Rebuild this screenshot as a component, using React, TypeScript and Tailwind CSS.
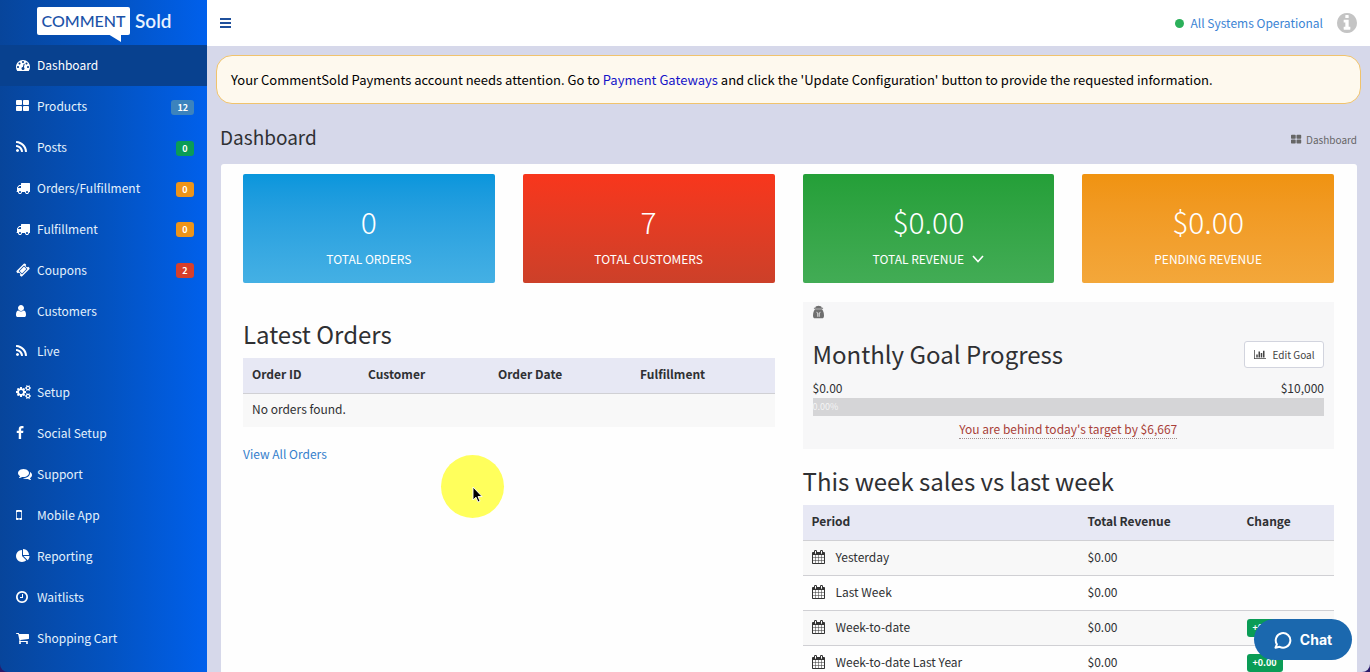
import React from "react";

type Glyph = { box: string; d: string };

const ICONS: Record<string, Glyph> = {
  dashboard: {
    box: "0 0 1792 1792",
    d: "M384 1152q0-53-37.5-90.5t-90.5-37.5-90.5 37.5-37.5 90.5 37.5 90.5 90.5 37.5 90.5-37.5 37.5-90.5zm192-448q0-53-37.5-90.5t-90.5-37.5-90.5 37.5-37.5 90.5 37.5 90.5 90.5 37.5 90.5-37.5 37.5-90.5zm428 481l101-382q6-26-7.5-48.5t-38.5-29.5-48 6.5-30 39.5l-101 382q-60 5-107 43.5t-63 98.5q-20 77 20 146t117 89 146-20 89-117q16-60-6-117t-72-91zm660-33q0-53-37.5-90.5t-90.5-37.5-90.5 37.5-37.5 90.5 37.5 90.5 90.5 37.5 90.5-37.5 37.5-90.5zm-640-640q0-53-37.5-90.5t-90.5-37.5-90.5 37.5-37.5 90.5 37.5 90.5 90.5 37.5 90.5-37.5 37.5-90.5zm448 192q0-53-37.5-90.5t-90.5-37.5-90.5 37.5-37.5 90.5 37.5 90.5 90.5 37.5 90.5-37.5 37.5-90.5zm320 448q0 261-141 483-19 29-54 29h-1402q-35 0-54-29-141-221-141-483 0-182 71-348t191-286 286-191 348-71 348 71 286 191 191 286 71 348z",
  },
  grid: {
    box: "64 0 1792 1792",
    d: "M832 1024v384q0 52-38 90t-90 38h-512q-52 0-90-38t-38-90v-384q0-52 38-90t90-38h512q52 0 90 38t38 90zm0-768v384q0 52-38 90t-90 38h-512q-52 0-90-38t-38-90v-384q0-52 38-90t90-38h512q52 0 90 38t38 90zm896 768v384q0 52-38 90t-90 38h-512q-52 0-90-38t-38-90v-384q0-52 38-90t90-38h512q52 0 90 38t38 90zm0-768v384q0 52-38 90t-90 38h-512q-52 0-90-38t-38-90v-384q0-52 38-90t90-38h512q52 0 90 38t38 90z",
  },
  rss: {
    box: "192 0 1792 1792",
    d: "M576 1344q0 80-56 136t-136 56-136-56-56-136 56-136 136-56 136 56 56 136zm512 123q2 28-17 48-18 21-47 21h-135q-25 0-43-16.5t-20-41.5q-22-229-184.5-391.5t-391.5-184.5q-25-2-41.5-20t-16.5-43v-135q0-29 21-47 17-17 43-17h5q160 13 306 80.5t259 181.5q114 113 181.5 259t80.5 306zm512 2q2 27-18 47-18 20-46 20h-143q-26 0-44.5-17.5t-19.5-42.5q-12-215-101-408.5t-231.5-336-336-231.5-408.5-102q-25-1-42.5-19.5t-17.5-43.5v-143q0-28 20-46 18-18 44-18h3q262 13 501.5 120t425.5 294q187 186 294 425.5t120 501.5z",
  },
  truck: {
    box: "0 0 1792 1792",
    d: "M640 1408q0-52-38-90t-90-38-90 38-38 90 38 90 90 38 90-38 38-90zm-384-512h384v-256h-158q-13 0-22 9l-195 195q-9 9-9 22v30zm1280 512q0-52-38-90t-90-38-90 38-38 90 38 90 90 38 90-38 38-90zm256-1088v1024q0 15-4 26.5t-13.5 18.5-16.5 11.5-23.5 6-22.5 2-25.5 0-22.5-.5q0 106-75 181t-181 75-181-75-75-181h-384q0 106-75 181t-181 75-181-75-75-181h-64q-3 0-22.5.5t-25.5 0-22.5-2-23.5-6-16.5-11.5-13.5-18.5-4-26.5q0-26 19-45t45-19v-320q0-8-.5-35t0-38 2.5-34.5 6.5-37 14-30.5 22.5-30l198-198q19-19 50.5-32t58.5-13h160v-192q0-26 19-45t45-19h1024q26 0 45 19t19 45z",
  },
  ticket: {
    box: "0 0 1792 1792",
    d: "M1024 452l316 316-572 572-316-316zm-211 979l618-618q19-19 19-45t-19-45l-362-362q-18-18-45-18t-45 18l-618 618q-19 19-19 45t19 45l362 362q18 18 45 18t45-18zm889-637l-907 908q-37 37-90.5 37t-90.5-37l-126-126q56-56 56-136t-56-136-136-56-136 56l-125-126q-37-37-37-90.5t37-90.5l907-906q37-37 90.5-37t90.5 37l125 125q-56 56-56 136t56 136 136 56 136-56l126 125q37 37 37 90.5t-37 90.5z",
  },
  user: {
    box: "256 0 1792 1792",
    d: "M1536 1399q0 109-62.5 187t-150.5 78h-854q-88 0-150.5-78t-62.5-187q0-85 8.5-160.5t31.5-152 58.5-131 94-89 134.5-34.5q131 128 313 128t313-128q76 0 134.5 34.5t94 89 58.5 131 31.5 152 8.5 160.5zm-256-887q0 159-112.5 271.5t-271.5 112.5-271.5-112.5-112.5-271.5 112.5-271.5 271.5-112.5 271.5 112.5 112.5 271.5z",
  },
  cogs: {
    box: "0 0 1792 1792",
    d: "M896 896q0-106-75-181t-181-75-181 75-75 181 75 181 181 75 181-75 75-181zm768 512q0-52-38-90t-90-38-90 38-38 90q0 53 37.5 90.5t90.5 37.5 90.5-37.5 37.5-90.5zm0-1024q0-52-38-90t-90-38-90 38-38 90q0 53 37.5 90.5t90.5 37.5 90.5-37.5 37.5-90.5zm-384 421v185q0 10-7 19.5t-16 10.5l-155 24q-11 35-32 76 34 48 90 115 7 11 7 20 0 12-7 19-23 30-82.5 89.5t-78.5 59.5q-11 0-21-7l-115-90q-37 19-77 31-11 108-23 155-7 24-30 24h-186q-11 0-20-7.5t-10-17.5l-23-153q-34-10-75-31l-118 89q-7 7-20 7-11 0-21-8-144-133-144-160 0-9 7-19 10-14 41-53t47-61q-23-44-35-82l-152-24q-10-1-17-9.5t-7-19.5v-185q0-10 7-19.5t16-10.5l155-24q11-35 32-76-34-48-90-115-7-11-7-20 0-12 7-20 22-30 82-89t79-59q11 0 21 7l115 90q34-18 77-32 11-108 23-154 7-24 30-24h186q11 0 20 7.5t10 17.5l23 153q34 10 75 31l118-89q8-7 20-7 11 0 21 8 144 133 144 160 0 9-7 19-12 16-42 54t-45 60q23 48 34 82l152 23q10 2 17 10.5t7 19.5zm640 533v140q0 16-149 31-12 27-30 52 51 113 51 138 0 4-4 7-122 71-124 71-8 0-46-47t-52-68q-20 2-30 2t-30-2q-14 21-52 68t-46 47q-2 0-124-71-4-3-4-7 0-25 51-138-18-25-30-52-149-15-149-31v-140q0-16 149-31 13-29 30-52-51-113-51-138 0-4 4-7 4-2 35-20t59-34 30-16q8 0 46 46.5t52 67.5q20-2 30-2t30 2q51-71 92-112l6-2q4 0 124 70 4 3 4 7 0 25-51 138 17 23 30 52 149 15 149 31zm0-1024v140q0 16-149 31-12 27-30 52 51 113 51 138 0 4-4 7-122 71-124 71-8 0-46-47t-52-68q-20 2-30 2t-30-2q-14 21-52 68t-46 47q-2 0-124-71-4-3-4-7 0-25 51-138-18-25-30-52-149-15-149-31v-140q0-16 149-31 13-29 30-52-51-113-51-138 0-4 4-7 4-2 35-20t59-34 30-16q8 0 46 46.5t52 67.5q20-2 30-2t30 2q51-71 92-112l6-2q4 0 124 70 4 3 4 7 0 25-51 138 17 23 30 52 149 15 149 31z",
  },
  facebook: {
    box: "384 0 1792 1792",
    d: "M1343 12v264h-157q-86 0-116 36t-30 108v189h293l-39 296h-254v759h-306v-759h-255v-296h255v-218q0-186 104-288.5t277-102.5q147 0 228 12z",
  },
  comments: {
    box: "-256 0 1792 1792",
    d: "M1408 768q0 139-94 257t-256.5 186.5-353.5 68.5q-86 0-176-16-124 88-278 128-36 9-86 16h-3q-11 0-20.5-8t-11.5-21q-1-3-1-6.5t.5-6.5 2-6l2.5-5 3.5-5.5 4-5 4.5-5 4-4.5q5-6 23-25t26-29.5 22.5-29 25-38.5 20.5-44q-124-72-195-177t-71-224q0-139 94-257t256.5-186.5 353.5-68.5 353.5 68.5 256.5 186.5 94 257zm384 256q0 120-71 224.5t-195 176.5q10 24 20.5 44t25 38.5 22.5 29 26 29.5 23 25q1 1 4 4.5t4.5 5 4 5 3.5 5.5l2.5 5 2 6 .5 6.5-1 6.5q-3 14-13 22t-22 7q-50-7-86-16-154-40-278-128-90 16-176 16-271 0-472-132 58 4 88 4 161 0 309-45t264-129q125-92 192-212t67-254q0-77-23-152 129 71 204 178t75 230z",
  },
  mobile: {
    box: "512 0 1792 1792",
    d: "M976 1408q0-33-23.5-56.5t-56.5-23.5-56.5 23.5-23.5 56.5 23.5 56.5 56.5 23.5 56.5-23.5 23.5-56.5zm208-160v-704q0-13-9.5-22.5t-22.5-9.5h-512q-13 0-22.5 9.5t-9.5 22.5v704q0 13 9.5 22.5t22.5 9.5h512q13 0 22.5-9.5t9.5-22.5zm-192-848q0-16-16-16h-160q-16 0-16 16t16 16h160q16 0 16-16zm288-16v1024q0 52-38 90t-90 38h-512q-52 0-90-38t-38-90v-1024q0-52 38-90t90-38h512q52 0 90 38t38 90z",
  },
  pie: {
    box: "0 0 1792 1792",
    d: "M768 890l546 546q-106 108-247.5 168t-298.5 60q-209 0-385.5-103t-279.5-279.5-103-385.5 103-385.5 279.5-279.5 385.5-103v762zm187 6h773q0 157-60 298.5t-168 247.5zm709-128h-768v-768q209 0 385.5 103t279.5 279.5 103 385.5z",
  },
  clock: {
    box: "128 0 1792 1792",
    d: "M1024 544v448q0 14-9 23t-23 9h-320q-14 0-23-9t-9-23v-64q0-14 9-23t23-9h224v-352q0-14 9-23t23-9h64q14 0 23 9t9 23zm416 352q0-148-73-273t-198-198-273-73-273 73-198 198-73 273 73 273 198 198 273 73 273-73 198-198 73-273zm224 0q0 209-103 385.5t-279.5 279.5-385.5 103-385.5-103-279.5-279.5-103-385.5 103-385.5 279.5-279.5 385.5-103 385.5 103 279.5 279.5 103 385.5z",
  },
  cart: {
    box: "64 0 1792 1792",
    d: "M704 1536q0 52-38 90t-90 38-90-38-38-90 38-90 90-38 90 38 38 90zm896 0q0 52-38 90t-90 38-90-38-38-90 38-90 90-38 90 38 38 90zm128-1088v512q0 24-16.5 42.5t-40.5 21.5l-1044 122q13 60 13 70 0 16-24 64h920q26 0 45 19t19 45-19 45-45 19h-1024q-26 0-45-19t-19-45q0-11 8-31.5t16-36 21.5-40 15.5-29.5l-177-823h-204q-26 0-45-19t-19-45 19-45 45-19h256q16 0 28.5 6.5t19.5 15.5 13 24.5 8 26 5.5 29.5 4.5 26h1201q26 0 45 19t19 45z",
  },
  calendar: {
    box: "64 0 1792 1792",
    d: "M192 1664h288v-288h-288v288zm352 0h320v-288h-320v288zm-352-352h288v-320h-288v320zm352 0h320v-320h-320v320zm-352-384h288v-288h-288v288zm736 736h320v-288h-320v288zm-384-736h320v-288h-320v288zm768 736h288v-288h-288v288zm-384-352h320v-320h-320v320zm-352-864v-288q0-13-9.5-22.5t-22.5-9.5h-64q-13 0-22.5 9.5t-9.5 22.5v288q0 13 9.5 22.5t22.5 9.5h64q13 0 22.5-9.5t9.5-22.5zm736 864h288v-320h-288v320zm-384-384h320v-288h-320v288zm384 0h288v-288h-288v288zm32-480v-288q0-13-9.5-22.5t-22.5-9.5h-64q-13 0-22.5 9.5t-9.5 22.5v288q0 13 9.5 22.5t22.5 9.5h64q13 0 22.5-9.5t9.5-22.5zm384-64v1280q0 52-38 90t-90 38h-1408q-52 0-90-38t-38-90v-1280q0-52 38-90t90-38h128v-96q0-66 47-113t113-47h64q66 0 113 47t47 113v96h384v-96q0-66 47-113t113-47h64q66 0 113 47t47 113v96h128q52 0 90 38t38 90z",
  },
  bars: {
    box: "0 0 2048 1792",
    d: "M640 896v512h-256v-512h256zm384-512v1024h-256v-1024h256zm1024 1152v128h-2048v-1536h128v1408h1920zm-640-896v768h-256v-768h256zm384-384v1152h-256v-1152h256z",
  },
  info: {
    box: "128 128 1536 1536",
    d: "M1152 1376v-160q0-14-9-23t-23-9h-96v-512q0-14-9-23t-23-9h-320q-14 0-23 9t-9 23v160q0 14 9 23t23 9h96v320h-96q-14 0-23 9t-9 23v160q0 14 9 23t23 9h448q14 0 23-9t9-23zm-128-896v-160q0-14-9-23t-23-9h-192q-14 0-23 9t-9 23v160q0 14 9 23t23 9h192q14 0 23-9t9-23zm640 416q0 209-103 385.5t-279.5 279.5-385.5 103-385.5-103-279.5-279.5-103-385.5 103-385.5 279.5-279.5 385.5-103 385.5 103 279.5 279.5 103 385.5z",
  },
};

function Icon({ name, className }: { name: string; className: string }) {
  return (
    <svg viewBox={ICONS[name].box} className={className} fill="currentColor" overflow="visible" aria-hidden="true">
      <path d={ICONS[name].d} />
    </svg>
  );
}

type NavItem = { icon: string; label: string; count?: string; tone?: string };

const NAV: NavItem[] = [
  { icon: "dashboard", label: "Dashboard" },
  { icon: "grid", label: "Products", count: "12", tone: "bg-[#3c83bd]" },
  { icon: "rss", label: "Posts", count: "0", tone: "bg-[#0a9c56]" },
  { icon: "truck", label: "Orders/Fulfillment", count: "0", tone: "bg-[#ee9418]" },
  { icon: "truck", label: "Fulfillment", count: "0", tone: "bg-[#ee9418]" },
  { icon: "ticket", label: "Coupons", count: "2", tone: "bg-[#d73f2a]" },
  { icon: "user", label: "Customers" },
  { icon: "rss", label: "Live" },
  { icon: "cogs", label: "Setup" },
  { icon: "facebook", label: "Social Setup" },
  { icon: "comments", label: "Support" },
  { icon: "mobile", label: "Mobile App" },
  { icon: "pie", label: "Reporting" },
  { icon: "clock", label: "Waitlists" },
  { icon: "cart", label: "Shopping Cart" },
];

function Logo() {
  return (
    <a href="#" className="flex h-[45px] shrink-0 items-start pt-[7px] pl-[37px] font-['Lato',sans-serif]">
      <span className="relative flex h-7 w-[93px] items-center justify-center rounded-xs bg-white text-[16px] font-medium text-[#1b52a8]">
        COMMENT
        <svg viewBox="0 0 13 8" className="absolute top-[27px] right-[9px] h-2 w-[13px]" fill="#ffffff" aria-hidden="true">
          <path d="M0 0h13v8z" />
        </svg>
      </span>
      <span className="pl-[5px] text-[19px] leading-7 font-semibold text-[#e8f2ff]">Sold</span>
    </a>
  );
}

function Sidebar() {
  return (
    <aside className="flex w-[207px] shrink-0 flex-col overflow-hidden rounded-bl-lg bg-linear-to-r from-[#07459b] via-[#0352bf] to-[#0060ec]">
      <Logo />
      <nav className="grid h-[613px] shrink-0 auto-rows-fr">
        {NAV.map((item, i) => (
          <a
            key={item.label}
            href="#"
            className={
              i === 0
                ? "flex items-center bg-[#08418f] pr-[13px] pl-4 text-white"
                : "flex items-center pr-[13px] pl-4 text-[#e3f1fc]"
            }
          >
            <Icon name={item.icon} className="mr-[7px] size-[14px] shrink-0 text-white" />
            <span className="flex-1 leading-5">{item.label}</span>
            {item.count && (
              <span
                className={`mt-[2px] min-w-[18px] rounded-[3px] px-[6px] text-center text-[9px] leading-[15px] font-bold text-white ${item.tone}`}
              >
                {item.count}
              </span>
            )}
          </a>
        ))}
      </nav>
    </aside>
  );
}

const STATS = [
  { value: "0", label: "TOTAL ORDERS", tone: "from-[#0896dc] to-[#44b0e4]" },
  { value: "7", label: "TOTAL CUSTOMERS", tone: "from-[#f8361c] to-[#cc4029]" },
  { value: "$0.00", label: "TOTAL REVENUE", tone: "from-[#249f38] to-[#42ac55]", more: true },
  { value: "$0.00", label: "PENDING REVENUE", tone: "from-[#f09310] to-[#f3a73a]" },
];

const PERIODS = [
  { name: "Yesterday", total: "$0.00", change: "" },
  { name: "Last Week", total: "$0.00", change: "" },
  { name: "Week-to-date", total: "$0.00", change: "+0.00" },
  { name: "Week-to-date Last Year", total: "$0.00", change: "+0.00" },
];

function Stats() {
  return (
    <section className="grid grid-cols-4 gap-7">
      {STATS.map((s) => (
        <div
          key={s.label}
          className={`flex h-[109px] flex-col items-center rounded-xs bg-linear-to-b pt-[27px] text-white ${s.tone}`}
        >
          <div className="text-[30px] leading-10 font-light">{s.value}</div>
          <div className="flex items-center gap-2 pt-2 text-[12px] leading-5">
            {s.label}
            {s.more && (
              <svg viewBox="0 0 12 8" className="h-2 w-3" fill="none" stroke="currentColor" strokeWidth="1.6" aria-hidden="true">
                <path d="M1 1l5 5.5L11 1" />
              </svg>
            )}
          </div>
        </div>
      ))}
    </section>
  );
}

function LatestOrders() {
  return (
    <section className="pt-[33px]">
      <h2 className="text-[24px] leading-9">Latest Orders</h2>
      <table className="mt-[6px] w-full table-fixed text-left leading-4">
        <thead>
          <tr className="h-[35px] border-b border-[#d0d0d4] bg-[#e7e8f4]">
            <th className="w-[116px] pb-[2px] pl-[9px]">Order ID</th>
            <th className="w-[130px] pb-[2px] pl-[9px]">Customer</th>
            <th className="w-[142px] pb-[2px] pl-[9px]">Order Date</th>
            <th className="pb-[2px] pl-[9px]">Fulfillment</th>
          </tr>
        </thead>
        <tbody>
          <tr className="h-[34px] bg-[#f8f8f8]">
            <td colSpan={4} className="pb-[2px] pl-[9px]">No orders found.</td>
          </tr>
        </tbody>
      </table>
      <a href="#" className="mt-[17px] inline-block leading-5 text-[#3580cc]">View All Orders</a>
    </section>
  );
}

function MonthlyGoal() {
  return (
    <section className="bg-[#f7f7f8] px-[10px] pt-[3px] pb-[10px]">
      <svg viewBox="0 0 12 14" className="h-[14px] w-[11px] text-[#6f6f6f]" fill="currentColor" aria-hidden="true">
        <path d="M3.2.6C4.300 1 5 .2 6 .2s1.700.8 2.800.4l.7 1.800H11v1H1v-1h1.500z" />
        <path d="M2.200 4h7.600C11.200 5.600 12 8 12 11c0 1.800-.8 2.800-2.300 2.800H2.300C.8 13.800 0 12.800 0 11c0-3 .8-5.400 2.200-7z" />
        <path d="M3.800 7.300l1.400.7v4.200M8.200 7.300L6.800 8v4.200" fill="none" stroke="#f7f7f8" strokeWidth="0.9" />
      </svg>
      <div className="mt-[17px] flex items-center justify-between">
        <h2 className="text-[24px] leading-9">Monthly Goal Progress</h2>
        <button className="flex h-[27px] w-20 items-center justify-center gap-[7px] rounded-[3px] border border-[#d2d4de] bg-white text-[10px] text-[#444444]">
          <Icon name="bars" className="h-[11px] w-3" />
          Edit Goal
        </button>
      </div>
      <div className="mt-[6px] flex justify-between leading-5">
        <span>$0.00</span>
        <span>$10,000</span>
      </div>
      <div className="h-[18px] bg-[#d5d5d7] text-[9px] leading-[18px] text-[#f4f4f4]">0.00%</div>
      <div className="pt-1 text-center">
        <span className="inline-block border-b border-dotted border-[#a09090] leading-[18px] text-[#a93f38]">
          You are behind today's target by $6,667
        </span>
      </div>
    </section>
  );
}

function WeekSales() {
  return (
    <section className="pt-[14px]">
      <h2 className="text-[24px] leading-9">This week sales vs last week</h2>
      <table className="mt-[6px] w-full text-left leading-4">
        <thead>
          <tr className="h-[35px] border-b border-[#d0d0d4] bg-[#e7e8f4]">
            <th className="w-[276px] pb-[2px] pl-[9px]">Period</th>
            <th className="w-[159px] pb-[2px] pl-[9px]">Total Revenue</th>
            <th className="pb-[2px] pl-[9px]">Change</th>
          </tr>
        </thead>
        <tbody>
          {PERIODS.map((p) => (
            <tr key={p.name} className="h-[35px] border-b border-[#d0d0d4] odd:bg-[#f8f8f8]">
              <td className="pb-[2px] pl-[9px]">
                <span className="flex items-center gap-[10px]">
                  <Icon name="calendar" className="size-[14px] text-[#333333]" />
                  {p.name}
                </span>
              </td>
              <td className="pb-[2px] pl-[9px]">{p.total}</td>
              <td className="pl-[9px]">
                {p.change && (
                  <span className="inline-block rounded-[3px] bg-[#0a9c56] px-[6px] text-[9px] leading-[18px] font-bold text-white">
                    {p.change}
                  </span>
                )}
              </td>
            </tr>
          ))}
        </tbody>
      </table>
    </section>
  );
}

export default function App() {
  return (
    <div className="relative flex h-screen overflow-hidden bg-[#2a1a6a] font-['Noto_Sans_CJK_SC','Noto_Sans',sans-serif] text-[12px] text-[#2f3033]">
      <Sidebar />
      <div className="flex min-w-0 flex-1 flex-col overflow-hidden rounded-br-lg bg-[#d6d8ea]">
        <header className="flex h-[46px] shrink-0 items-center justify-between bg-white pr-[13px] pl-[13px]">
          <button aria-label="Toggle navigation" className="text-[#1f509c]">
            <svg viewBox="0 0 11 10" className="h-[10px] w-[11px]" fill="currentColor" aria-hidden="true">
              <path d="M0 0h11v2H0zM0 4h11v2H0zM0 8h11v2H0z" />
            </svg>
          </button>
          <div className="flex items-center">
            <span className="mr-[7px] size-[9px] rounded-full bg-[#2bb05a]" />
            <a href="#" className="mr-[14px] leading-5 text-[#3b84d4]">All Systems Operational</a>
            <Icon name="info" className="size-5 text-[#c4c4c4]" />
          </div>
        </header>

        <main className="min-h-0 flex-1 px-[9px] pt-[9px]">
          <div className="rounded-2xl border border-[#f0c36d] bg-[#fef9ee] px-[14px] py-[14px] text-[13px] leading-[19px] text-black">
            Your CommentSold Payments account needs attention. Go to{" "}
            <a href="#" className="text-[#1414c8]">Payment Gateways</a> and click the 'Update Configuration' button to
            provide the requested information.
          </div>

          <div className="flex items-center justify-between pt-[19px] pr-1 pl-1">
            <h1 className="text-[19px] leading-7">Dashboard</h1>
            <div className="flex items-center gap-1 pt-1 text-[10px] text-[#666666]">
              <Icon name="grid" className="size-[11px]" />
              Dashboard
            </div>
          </div>

          <div className="mt-[13px] mr-1 ml-[5px] min-h-[520px] rounded-t-[3px] bg-[#fefefe] pt-[10px] pr-[23px] pl-[22px]">
            <Stats />
            <div className="grid grid-cols-2 gap-7">
              <LatestOrders />
              <div className="pt-[19px]">
                <MonthlyGoal />
                <WeekSales />
              </div>
            </div>
          </div>
        </main>
      </div>

      <div className="pointer-events-none absolute top-[455px] left-[441px] size-[63px] rounded-full bg-[#ffff5c]">
        <svg viewBox="0 0 11 17" className="absolute top-[31px] left-[31px] h-[17px] w-[11px]" aria-hidden="true">
          <path d="M1 1v13l3-2.800 2 4.800 2-.9-2-4.600h4z" fill="#000000" stroke="#ffffff" strokeWidth="0.9" />
        </svg>
      </div>

      <button className="absolute right-[18px] bottom-3 flex h-[41px] w-[98px] items-center justify-center gap-2 rounded-full bg-[#1b68ae] font-['Inter',sans-serif] text-[14px] font-bold text-white">
        <svg viewBox="0 0 18 18" className="size-[18px]" fill="none" stroke="currentColor" strokeWidth="2" strokeLinejoin="round" aria-hidden="true">
          <path d="M2.900 13.300A7.300 7.300 0 1 1 5.600 15.800L1.500 16.700z" />
        </svg>
        Chat
      </button>
    </div>
  );
}
